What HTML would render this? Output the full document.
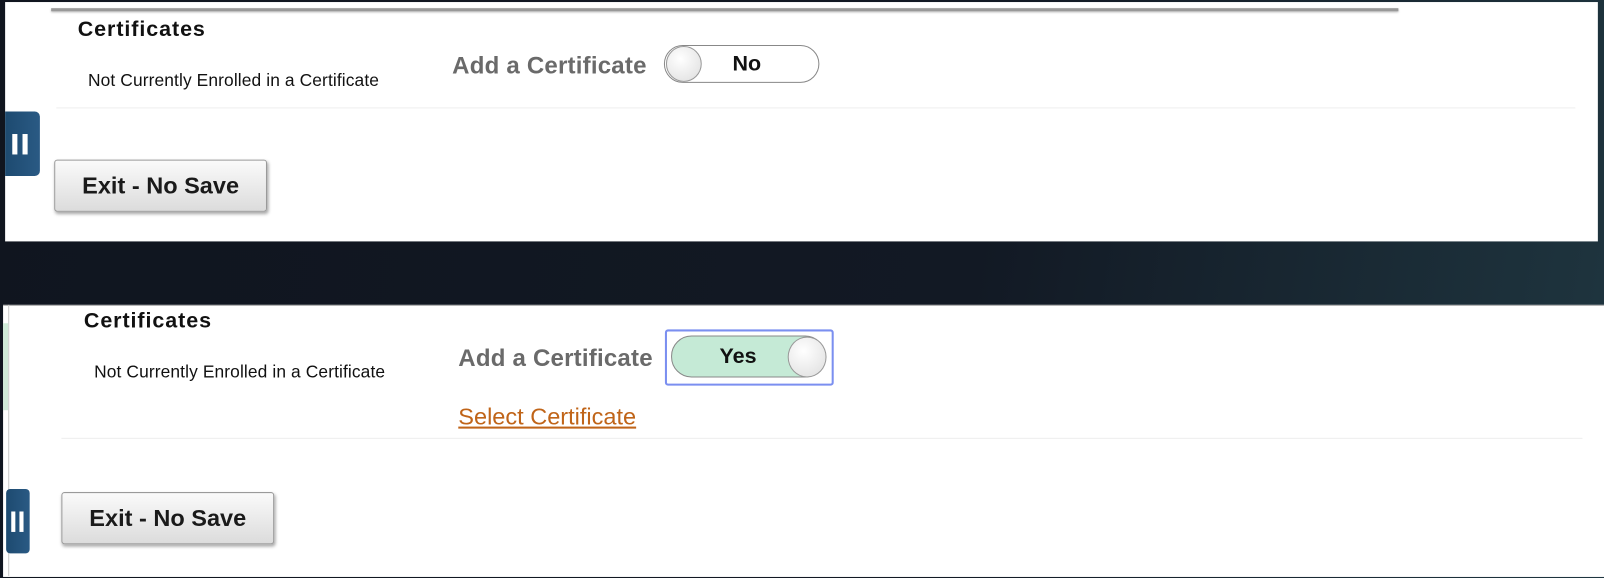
<!DOCTYPE html>
<html><head><style>
body{margin:0;width:1604px;height:578px;overflow:hidden;background:linear-gradient(100deg,#10151f 0%,#121924 60%,#1f3640 100%);font-family:"Liberation Sans",sans-serif;position:relative}
#w{position:absolute;left:0;top:0;width:1568px;height:565px;transform:scale(1.02296);transform-origin:0 0}
.a{position:absolute;white-space:nowrap}
.panel{background:#fff}
.h{font-weight:bold;font-size:21px;letter-spacing:0.9px;color:#111}
.sm{font-size:17px;color:#111;letter-spacing:0.1px}
.lbl{font-weight:bold;font-size:23.5px;color:#6a6a6a;letter-spacing:0.2px}
.btn{border:1px solid #9a9a9a;border-radius:3px;background:linear-gradient(#fafafa,#dcdcdc);box-shadow:1px 2px 3px rgba(0,0,0,.35);font-weight:bold;font-size:23px;color:#1a1a1a;display:flex;align-items:center;justify-content:center}
.tab{background:linear-gradient(90deg,#1d4a70,#2a5a84);border-radius:0 5px 5px 0}
.bar{position:absolute;width:5px;height:20px;background:#fff;top:50%;margin-top:-10px}
.tog{border:1.5px solid #888;border-radius:20px;font-weight:bold;font-size:21px;color:#111;display:flex;align-items:center;justify-content:center}
.knob{position:absolute;border-radius:50%;border:1.5px solid #999;background:radial-gradient(circle at 40% 35%,#fff,#ddd)}
</style></head><body><div id="w">
<div class="a panel" style="left:5px;top:2px;width:1557px;height:234px"></div>
<div class="a" style="left:50px;top:8px;width:1317px;height:3px;background:#999;box-shadow:0 1px 2px #bbb"></div>
<div class="a h" style="left:76px;top:17px">Certificates</div>
<div class="a sm" style="left:86px;top:69px">Not Currently Enrolled in a Certificate</div>
<div class="a lbl" style="left:442px;top:51px">Add a Certificate</div>
<div class="a tog" style="left:649px;top:44px;width:150px;height:35px;background:#fff"><span style="margin-left:10px">No</span></div>
<div class="knob" style="left:651px;top:45px;width:33px;height:33px"></div>
<div class="a" style="left:55px;top:105px;width:1485px;height:1px;background:#eee"></div>
<div class="a tab" style="left:5px;top:109px;width:34px;height:63px"><div class="bar" style="left:7px"></div><div class="bar" style="left:17px"></div></div>
<div class="a btn" style="left:53px;top:156px;width:206px;height:49px">Exit - No Save</div>

<div class="a panel" style="left:3px;top:298px;width:1565px;height:265px;border-top:1px solid #aaa"></div>
<div class="a" style="left:8px;top:298px;width:1px;height:265px;background:#ccc"></div>
<div class="a" style="left:3px;top:316px;width:5px;height:85px;background:#cfead8"></div>
<div class="a h" style="left:82px;top:302px">Certificates</div>
<div class="a sm" style="left:92px;top:354px">Not Currently Enrolled in a Certificate</div>
<div class="a lbl" style="left:448px;top:337px">Add a Certificate</div>
<div class="a" style="left:650px;top:322px;width:161px;height:51px;border:2px solid #7b8ff0;border-radius:3px"></div>
<div class="a tog" style="left:656px;top:328px;width:149px;height:39px;background:#c5ead6"><span style="margin-right:20px">Yes</span></div>
<div class="knob" style="left:770px;top:329px;width:36px;height:38px"></div>
<div class="a" style="left:448px;top:394px;font-size:23px;color:#c06418;text-decoration:underline">Select Certificate</div>
<div class="a" style="left:60px;top:428px;width:1487px;height:1px;background:#eee"></div>
<div class="a tab" style="left:6px;top:478px;width:23px;height:63px;border-radius:4px"><div class="bar" style="left:5px;width:4px"></div><div class="bar" style="left:13px;width:4px"></div></div>
<div class="a btn" style="left:60px;top:481px;width:206px;height:49px">Exit - No Save</div>
</div></body></html>
